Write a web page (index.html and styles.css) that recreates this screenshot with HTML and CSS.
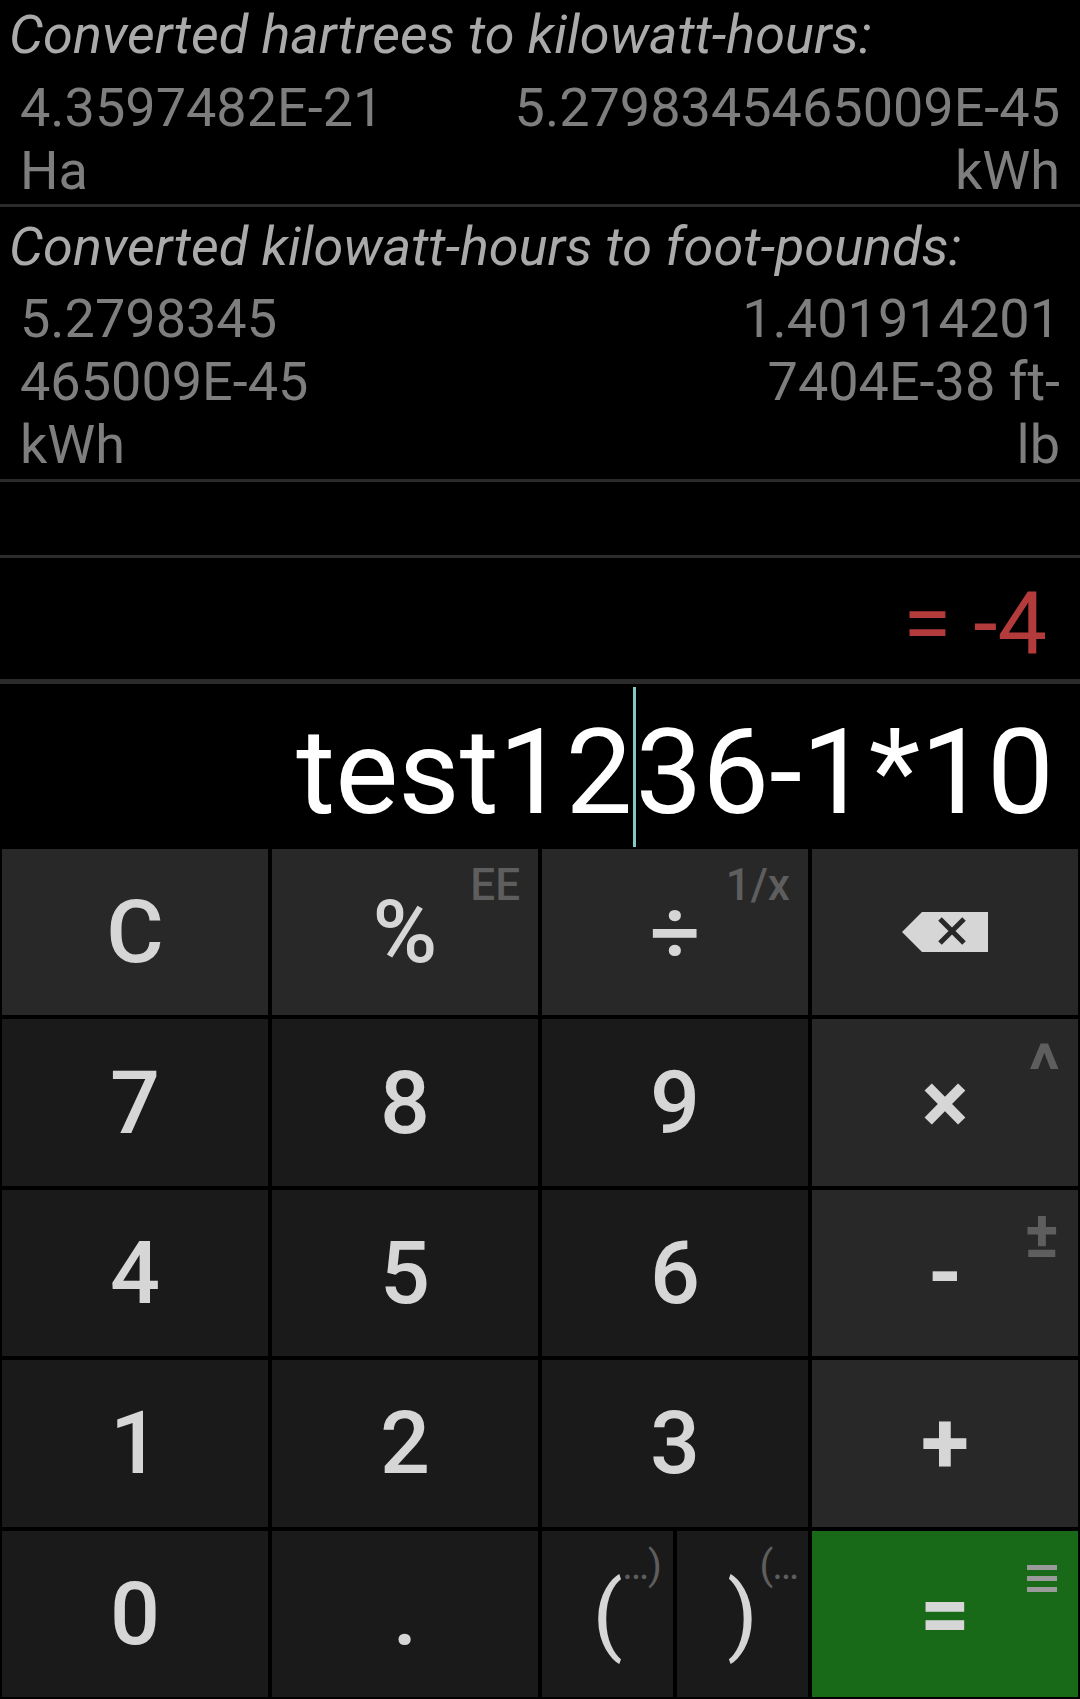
FILE: index.html
```html
<!DOCTYPE html>
<html lang="en">
<head>
<meta charset="utf-8">
<title>Calculator</title>
<link rel="stylesheet" href="styles.css">
</head>
<body>
<div class="app">
  <section class="conv conv-first">
    <div class="conv-title">Converted hartrees to kilowatt-hours:</div>
    <div class="conv-row">
      <div class="conv-from">4.3597482E-21<br>Ha</div>
      <div class="conv-to">5.2798345465009E-45<br>kWh</div>
    </div>
  </section>
  <div class="divider"></div>
  <section class="conv conv-second">
    <div class="conv-title">Converted kilowatt-hours to foot-pounds:</div>
    <div class="conv-row">
      <div class="conv-from">5.2798345<br>465009E-45<br>kWh</div>
      <div class="conv-to">1.401914201<br>7404E-38 ft-<br>lb</div>
    </div>
  </section>
  <div class="divider"></div>
  <div class="empty-row"></div>
  <div class="divider"></div>
  <div class="result"><span class="result-text">= -4</span></div>
  <div class="divider divider-thick"></div>
  <div class="input"><span class="input-text">test12</span><span class="caret"></span><span class="input-text">36-1*10</span></div>
  <div class="keypad">
    <div class="key key-op">C</div>
    <div class="key key-op">%<span class="alt">EE</span></div>
    <div class="key key-op">÷<span class="alt">1/x</span></div>
    <div class="key key-op">
      <svg class="backspace" width="86" height="40" viewBox="0 0 86 40">
        <path d="M0 20 L20 0 L86 0 L86 40 L20 40 Z" fill="#d6d6d6"/>
        <path d="M38 7 L62 31 M62 7 L38 31" stroke="#282828" stroke-width="5"/>
      </svg>
    </div>
    <div class="key">7</div>
    <div class="key">8</div>
    <div class="key">9</div>
    <div class="key key-op key-bold">×<span class="alt alt-caret">^</span></div>
    <div class="key">4</div>
    <div class="key">5</div>
    <div class="key">6</div>
    <div class="key key-op key-bold">-<span class="alt alt-pm">±</span></div>
    <div class="key">1</div>
    <div class="key">2</div>
    <div class="key">3</div>
    <div class="key key-op key-bold">+</div>
    <div class="key">0</div>
    <div class="key">.</div>
    <div class="key-pair">
      <div class="key key-paren"><span class="paren-main">(</span><span class="alt alt-paren alt-open">…)</span></div>
      <div class="key key-paren"><span class="paren-main">)</span><span class="alt alt-paren alt-close">(…</span></div>
    </div>
    <div class="key key-equals key-bold">=
      <svg class="menu-icon" width="30" height="28" viewBox="0 0 30 28">
        <rect x="0" y="0" width="30" height="5" fill="#9a9a9a"/>
        <rect x="0" y="11" width="30" height="5" fill="#9a9a9a"/>
        <rect x="0" y="22" width="30" height="5" fill="#9a9a9a"/>
      </svg>
    </div>
  </div>
</div>
</body>
</html>
```

FILE: styles.css
```css
html, body {
  margin: 0;
  padding: 0;
  background: #000;
}

body {
  font-family: Roboto, "Liberation Sans", sans-serif;
  width: 1080px;
  height: 1699px;
  overflow: hidden;
}

.app {
  display: flex;
  flex-direction: column;
  width: 1080px;
  height: 1699px;
}

.conv {
  box-sizing: border-box;
  display: flex;
  flex-direction: column;
  flex: none;
}

.conv-first {
  height: 204px;
  padding-top: 5px;
}

.conv-second {
  height: 272px;
  padding-top: 10px;
}

.conv-title {
  font-style: italic;
  font-size: 54px;
  line-height: 60px;
  color: #aaaaaa;
  padding-left: 9px;
  white-space: nowrap;
}

.conv-row {
  display: flex;
  justify-content: space-between;
  padding: 0 20px 0 20px;
  font-size: 54px;
  line-height: 63px;
  color: #7e7e7e;
}

.conv-first .conv-row {
  margin-top: 11px;
}

.conv-second .conv-row {
  margin-top: 10px;
}

.conv-from {
  text-align: left;
}

.conv-to {
  text-align: right;
}

.divider {
  height: 3px;
  background: #2b2b2b;
  flex: none;
}

.divider-thick {
  height: 5px;
}

.empty-row {
  height: 73px;
  flex: none;
}

.result {
  height: 121px;
  box-sizing: border-box;
  display: flex;
  justify-content: flex-end;
  align-items: flex-end;
  padding: 0 33px 5px 0;
  flex: none;
}

.result-text {
  font-size: 88px;
  line-height: normal;
  color: #b43b3b;
  white-space: pre;
}

.input {
  height: 163px;
  box-sizing: border-box;
  display: flex;
  justify-content: flex-end;
  align-items: flex-end;
  padding: 0 26px 5px 0;
  flex: none;
}

.input-text {
  font-size: 119px;
  line-height: normal;
  color: #ffffff;
  white-space: pre;
}

.caret {
  align-self: stretch;
  width: 3px;
  margin: 3px -1px -5px 1px;
  background: #7fcbc2;
  position: relative;
  z-index: 1;
}

.keypad {
  flex: 1;
  box-sizing: border-box;
  display: grid;
  grid-template-columns: repeat(4, 1fr);
  grid-template-rows: repeat(5, 1fr);
  gap: 4px;
  padding: 2px;
  background: #000;
}

.key {
  position: relative;
  display: flex;
  align-items: center;
  justify-content: center;
  background: #1a1a1a;
  color: #d6d6d6;
  font-size: 88px;
  font-weight: 500;
  line-height: 1;
}

.key-op {
  background: #282828;
}

.key-bold {
  font-weight: 700;
}

.key-equals {
  background: #196a18;
}

.key-pair {
  display: grid;
  grid-template-columns: 1fr 1fr;
  gap: 4px;
}

.key-paren {
  font-weight: 400;
}

.paren-main {
  position: relative;
  z-index: 2;
  line-height: 0.5;
}

.alt {
  position: absolute;
  top: 14px;
  right: 18px;
  font-size: 44px;
  font-weight: 500;
  color: #5e5e5e;
  line-height: 1;
}

.alt-caret {
  top: 16px;
  font-size: 72px;
  font-weight: 700;
}

.alt-pm {
  top: 14px;
  right: 19px;
  font-size: 64px;
  font-weight: 700;
}

.alt-paren {
  top: 15px;
  font-size: 40px;
  font-weight: 400;
  letter-spacing: -1px;
}

.alt-open {
  right: 12px;
}

.alt-close {
  right: 10px;
}

.menu-icon {
  position: absolute;
  top: 34px;
  right: 21px;
}
```
